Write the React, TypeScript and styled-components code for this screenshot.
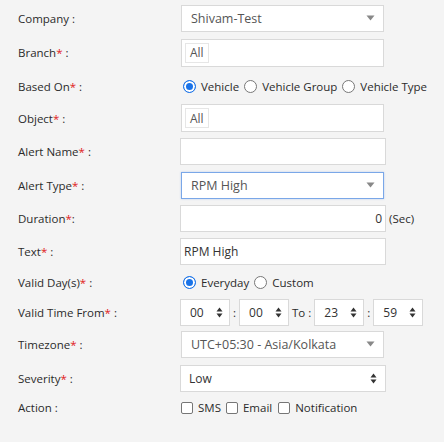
import styled, { createGlobalStyle, css } from "styled-components";

const GlobalStyle = createGlobalStyle`
  html, body {
    margin: 0;
    padding: 0;
    background: #f4f4f4;
  }
  body {
    font-family: "Open Sans", "Liberation Sans", sans-serif;
    font-size: 11.5px;
    color: #2b2b2b;
  }
`;

const Form = styled.div`
  padding: 1px 0 0 18px;
  width: 426px;
`;

const Row = styled.div<{ $h: number }>`
  display: grid;
  grid-template-columns: 162px 1fr;
  align-items: center;
  height: ${(p) => p.$h}px;
`;

const Label = styled.div`
  color: #2b2b2b;
  white-space: nowrap;
`;

const Req = styled.span`
  color: #e02020;
`;

const fieldBox = css`
  box-sizing: border-box;
  height: 27px;
  background: #fff;
  border: 1px solid #d9d9d9;
  display: flex;
  align-items: center;
`;

const Select = styled.div<{ $focus?: boolean }>`
  ${fieldBox};
  width: 203px;
  margin-left: 1px;
  padding: 0 8px 0 9px;
  justify-content: space-between;
  color: #555;
  font-size: 12.5px;
  border-color: ${(p) => (p.$focus ? "#7aa7e8" : "#d9d9d9")};
  box-shadow: ${(p) => (p.$focus ? "0 0 2px rgba(82,140,230,0.35)" : "none")};
`;

const Input = styled.div<{ $right?: boolean }>`
  ${fieldBox};
  width: 206px;
  padding: 0 3px;
  font-size: 12px;
  justify-content: ${(p) => (p.$right ? "flex-end" : "flex-start")};
  color: #333;
`;

const TagBox = styled.div`
  ${fieldBox};
  width: 203px;
  height: 28px;
  margin-left: 1px;
  padding: 0 3px;
`;

const Tag = styled.span`
  box-sizing: border-box;
  height: 20px;
  padding: 0 4px;
  display: inline-flex;
  align-items: center;
  border: 1px solid #e6e6e6;
  color: #555;
  font-size: 12px;
`;

const SeveritySelect = styled.div`
  ${fieldBox};
  width: 206px;
  padding: 0 8px;
  justify-content: space-between;
  color: #333;
  font-size: 12px;
`;

const Inline = styled.div`
  display: flex;
  align-items: center;
  white-space: nowrap;
`;

const Radio = styled.span<{ $on?: boolean }>`
  box-sizing: border-box;
  width: 13px;
  height: 13px;
  border-radius: 50%;
  border: 1px solid ${(p) => (p.$on ? "#1a73e8" : "#777")};
  background: ${(p) => (p.$on ? "#1a73e8" : "#fff")};
  box-shadow: ${(p) => (p.$on ? "inset 0 0 0 2px #fff" : "none")};
  margin: 0 5px 0 3px;
  flex: none;
`;

const Check = styled.span`
  box-sizing: border-box;
  width: 12px;
  height: 12px;
  border-radius: 2px;
  border: 1px solid #767676;
  background: #fff;
  margin: 1px 5px 0 1px;
  flex: none;
`;

const Opt = styled.span<{ $gap?: number }>`
  margin-right: ${(p) => p.$gap ?? 2}px;
`;

const Spin = styled.div`
  ${fieldBox};
  width: 50px;
  padding: 0 6px 0 9px;
  justify-content: space-between;
  color: #333;
  font-size: 12px;
`;

const Sep = styled.span`
  padding: 0 3px;
`;

const Unit = styled.span`
  margin-left: 3px;
`;

const Arrow = () => (
  <svg width="9" height="6" viewBox="0 0 9 6">
    <path d="M0.5 0.5 L8.5 0.5 L4.5 5.5 Z" fill="#888" />
  </svg>
);

const Updown = () => (
  <svg width="7" height="11" viewBox="0 0 7 11">
    <path d="M0.5 4.5 L3.5 0.5 L6.5 4.5 Z M0.5 6.5 L3.5 10.5 L6.5 6.5 Z" fill="#333" />
  </svg>
);

const L = ({ text, req, colon = " :" }: { text: string; req?: boolean; colon?: string }) => (
  <Label>
    {text}
    {req && <Req>*</Req>}
    {colon}
  </Label>
);

export default function App() {
  return (
    <>
      <GlobalStyle />
      <Form>
        <Row $h={34}>
          <L text="Company" />
          <Select>
            <span>Shivam-Test</span>
            <Arrow />
          </Select>
        </Row>
        <Row $h={35}>
          <L text="Branch" req />
          <TagBox>
            <Tag>All</Tag>
          </TagBox>
        </Row>
        <Row $h={32}>
          <L text="Based On" req />
          <Inline>
            <Radio $on />
            <Opt>Vehicle</Opt>
            <Radio />
            <Opt>Vehicle Group</Opt>
            <Radio />
            <Opt>Vehicle Type</Opt>
          </Inline>
        </Row>
        <Row $h={32}>
          <L text="Object" req />
          <TagBox>
            <Tag>All</Tag>
          </TagBox>
        </Row>
        <Row $h={34}>
          <L text="Alert Name" req />
          <Input />
        </Row>
        <Row $h={34}>
          <L text="Alert Type" req />
          <Select $focus>
            <span>RPM High</span>
            <Arrow />
          </Select>
        </Row>
        <Row $h={33}>
          <L text="Duration" req colon=":" />
          <Inline>
            <Input $right>0</Input>
            <Unit>(Sec)</Unit>
          </Inline>
        </Row>
        <Row $h={32}>
          <L text="Text" req />
          <Input>RPM High</Input>
        </Row>
        <Row $h={30}>
          <L text="Valid Day(s)" req />
          <Inline>
            <Radio $on />
            <Opt>Everyday</Opt>
            <Radio />
            <Opt>Custom</Opt>
          </Inline>
        </Row>
        <Row $h={30}>
          <L text="Valid Time From" req />
          <Inline>
            <Spin>
              <span>00</span>
              <Updown />
            </Spin>
            <Sep>:</Sep>
            <Spin>
              <span>00</span>
              <Updown />
            </Spin>
            <Sep>To :</Sep>
            <Spin>
              <span>23</span>
              <Updown />
            </Spin>
            <Sep>:</Sep>
            <Spin>
              <span>59</span>
              <Updown />
            </Spin>
          </Inline>
        </Row>
        <Row $h={34}>
          <L text="Timezone" req />
          <Select>
            <span>UTC+05:30 - Asia/Kolkata</span>
            <Arrow />
          </Select>
        </Row>
        <Row $h={34}>
          <L text="Severity" req />
          <SeveritySelect>
            <span>Low</span>
            <Updown />
          </SeveritySelect>
        </Row>
        <Row $h={24}>
          <L text="Action" />
          <Inline>
            <Check />
            <Opt $gap={4}>SMS</Opt>
            <Check />
            <Opt $gap={5}>Email</Opt>
            <Check />
            <Opt>Notification</Opt>
          </Inline>
        </Row>
      </Form>
    </>
  );
}
